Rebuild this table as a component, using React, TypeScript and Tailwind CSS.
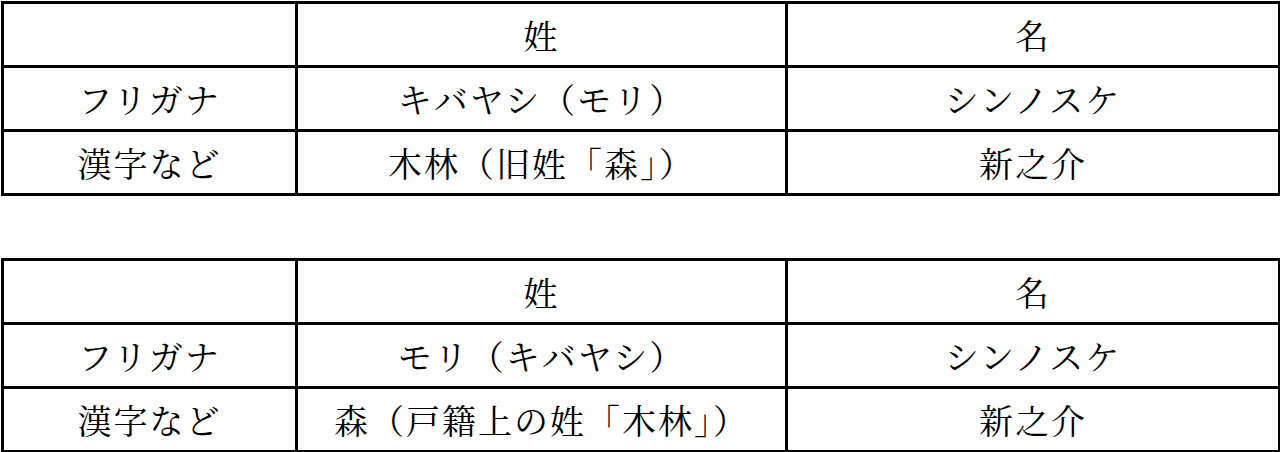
const tables = [
  {
    kana: ["キバヤシ（モリ）", "シンノスケ"],
    kanji: ["木林（旧姓「森」）", "新之介"],
  },
  {
    kana: ["モリ（キバヤシ）", "シンノスケ"],
    kanji: ["森（戸籍上の姓「木林」）", "新之介"],
  },
];

function NameTable({ kana, kanji }: { kana: string[]; kanji: string[] }) {
  const cell = "border-[3px] border-black text-center align-middle p-0";
  return (
    <table className="border-collapse table-fixed w-[1277px] ml-[1px] text-[34px] tracking-[2px] leading-none text-black">
      <colgroup>
        <col className="w-[294px]" />
        <col className="w-[490px]" />
        <col className="w-[493px]" />
      </colgroup>
      <tbody>
        <tr className="h-[64px]">
          <td className={cell}></td>
          <td className={cell}>姓</td>
          <td className={cell}>名</td>
        </tr>
        <tr className="h-[64px]">
          <td className={cell}>フリガナ</td>
          <td className={cell}>{kana[0]}</td>
          <td className={cell}>{kana[1]}</td>
        </tr>
        <tr className="h-[64px]">
          <td className={cell}>漢字など</td>
          <td className={cell}>{kanji[0]}</td>
          <td className={cell}>{kanji[1]}</td>
        </tr>
      </tbody>
    </table>
  );
}

export default function App() {
  return (
    <div
      className="w-[1280px] h-[452px] bg-white pt-[1px] flex flex-col gap-[62px]"
      style={{ fontFamily: '"Noto Serif CJK JP", "Noto Sans CJK JP", serif' }}
    >
      {tables.map((t, i) => (
        <NameTable key={i} kana={t.kana} kanji={t.kanji} />
      ))}
    </div>
  );
}
